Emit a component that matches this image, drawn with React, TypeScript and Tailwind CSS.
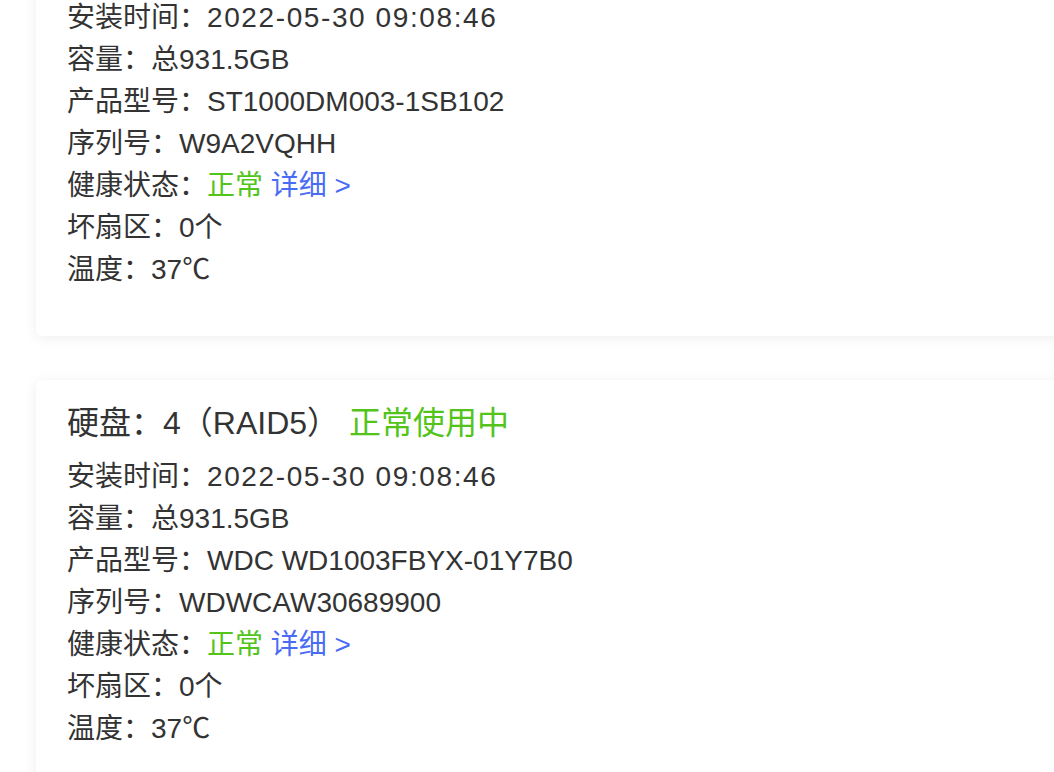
const FONT = '"Liberation Sans", "Noto Sans CJK SC", sans-serif';

type Disk = {
  no: number;
  raid: string;
  installedAt: string;
  capacity: string;
  model: string;
  serial: string;
  badSectors: number;
  temperature: number;
};

const DISKS: Disk[] = [
  {
    no: 3,
    raid: 'RAID5',
    installedAt: '2022-05-30 09:08:46',
    capacity: '总931.5GB',
    model: 'ST1000DM003-1SB102',
    serial: 'W9A2VQHH',
    badSectors: 0,
    temperature: 37,
  },
  {
    no: 4,
    raid: 'RAID5',
    installedAt: '2022-05-30 09:08:46',
    capacity: '总931.5GB',
    model: 'WDC WD1003FBYX-01Y7B0',
    serial: 'WDWCAW30689900',
    badSectors: 0,
    temperature: 37,
  },
];

function DiskCard({ disk }: { disk: Disk }) {
  return (
    <div className="bg-white rounded-md shadow-[0_2px_14px_rgba(0,0,0,0.07)] pl-[31px] pr-8 pt-[21px] pb-[45px]">
      {/* 标题 */}
      <div className="text-[32px] leading-[44px] text-[#333] mb-[11px]">
        硬盘：{disk.no}（{disk.raid}）
        <span className="ml-[10px] text-[#52c41a]">正常使用中</span>
      </div>
      <div className="text-[28px] leading-[42px] text-[#333]">
        <div>
          安装时间：<span className="tracking-[1.6px]">{disk.installedAt}</span>
        </div>
        <div>容量：{disk.capacity}</div>
        <div>产品型号：{disk.model}</div>
        <div>序列号：{disk.serial}</div>
        <div>
          健康状态：<span className="text-[#52c41a]">正常</span>{' '}
          <span className="text-[#4a6cf5] cursor-pointer">详细 &gt;</span>
        </div>
        <div>坏扇区：{disk.badSectors}个</div>
        <div>温度：{disk.temperature}℃</div>
      </div>
    </div>
  );
}

export default function App() {
  return (
    <div className="bg-white min-h-screen overflow-hidden" style={{ fontFamily: FONT }}>
      <div className="mt-[-79px] pl-[36px] mr-[-40px] flex flex-col gap-[44px]">
        {DISKS.map(d => (
          <DiskCard key={d.no} disk={d} />
        ))}
      </div>
    </div>
  );
}
